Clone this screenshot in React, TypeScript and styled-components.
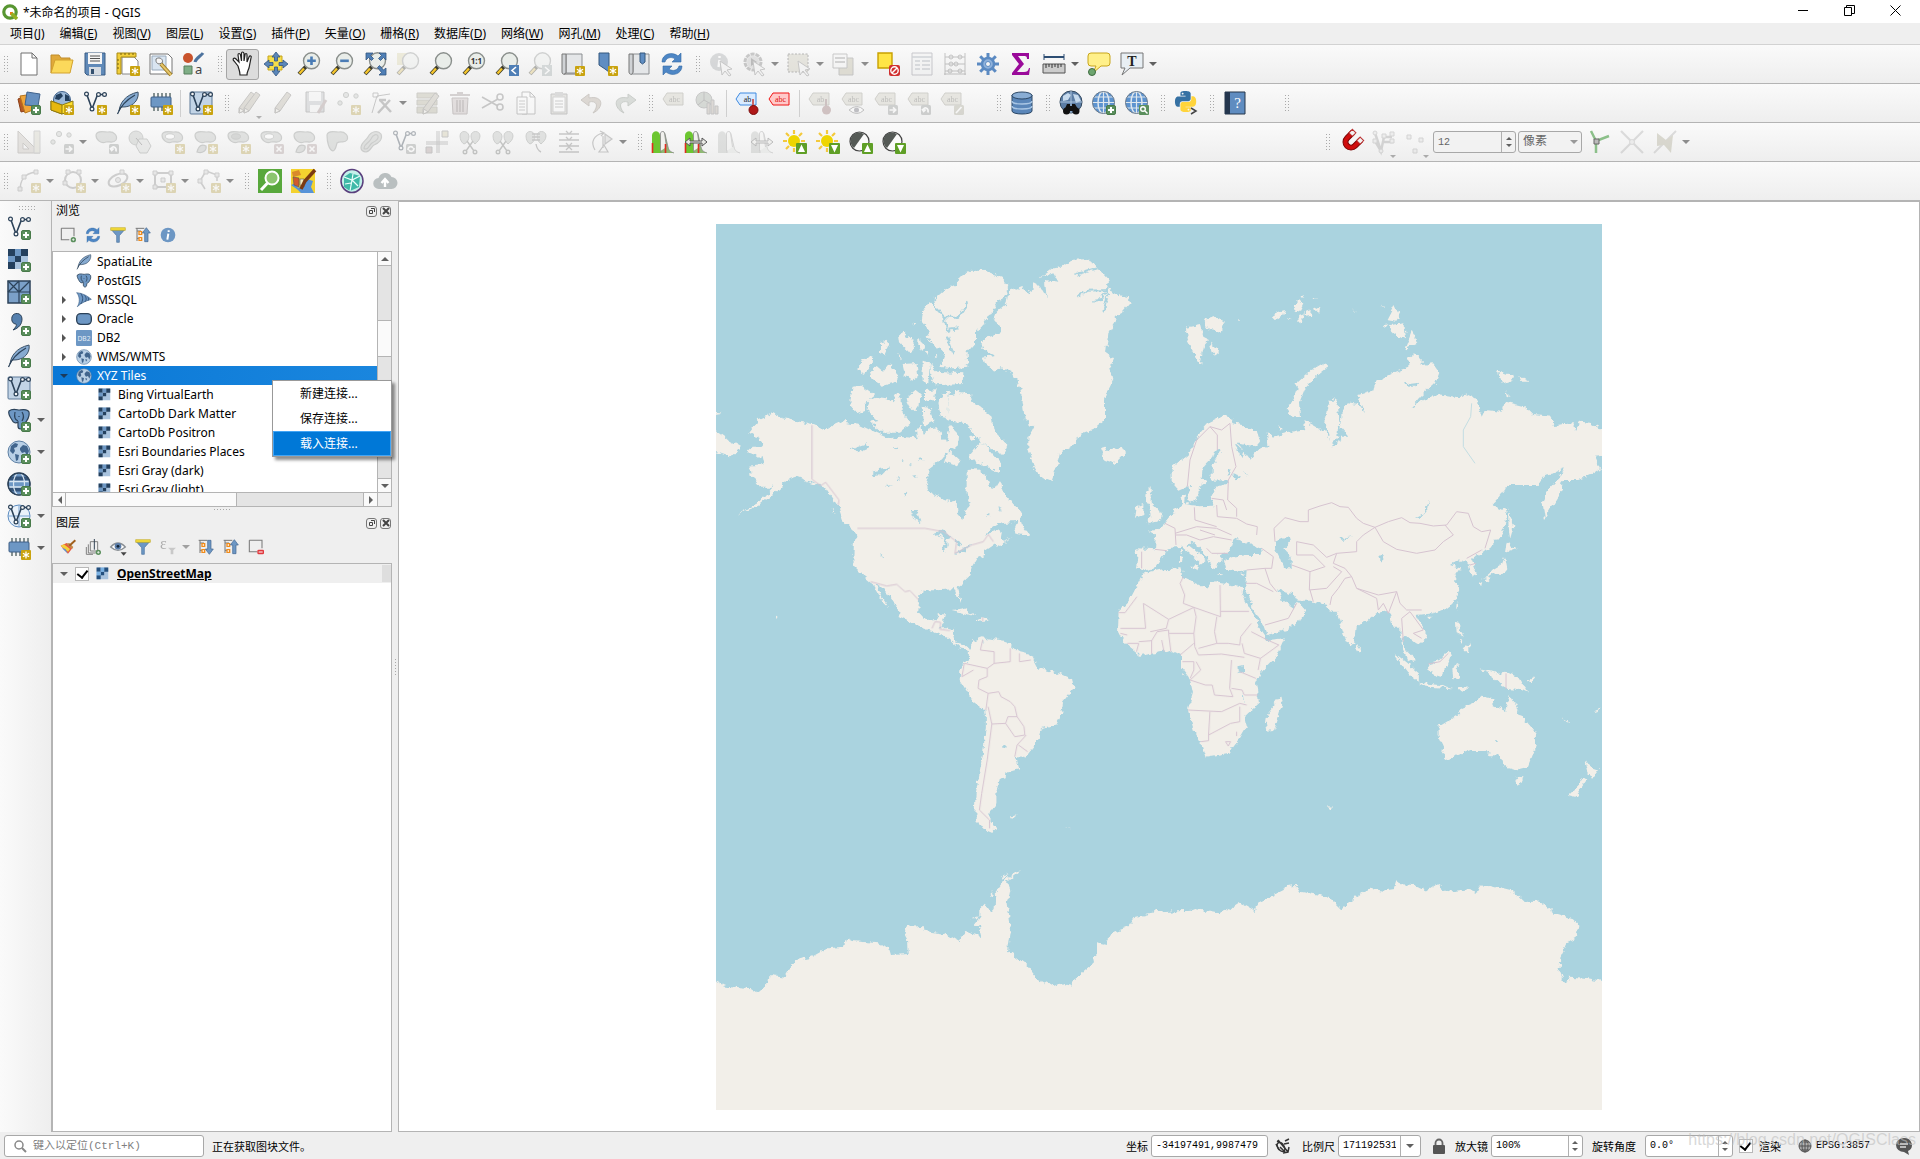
import React from "react";
import styled, { createGlobalStyle, css } from "styled-components";

/* ------------------------------------------------------------------ */
/* Global                                                              */
/* ------------------------------------------------------------------ */

const uiFont = `"Noto Sans", "Noto Sans CJK SC", sans-serif`;
const monoFont = `"Liberation Mono", "Noto Sans CJK SC", monospace`;
const line = "#b4b4b4";

const GlobalStyle = createGlobalStyle`
  * { box-sizing: border-box; }
  body { margin: 0; background: #efefef; font-family: ${uiFont}; font-size: 12px; color: #000; }
  button, input, select { font: inherit; color: inherit; }
`;

/* ------------------------------------------------------------------ */
/* Icon pieces                                                         */
/* ------------------------------------------------------------------ */

const blue = "#6d97c4";
const navy = "#2c4259";

const Star = () => (
  <g>
    <rect x="14" y="14" width="10" height="10" rx="1" fill="#c9a30f" />
    <path d="M19 15.4v7.2M15.9 17.2l6.2 3.6M22.1 17.2l-6.2 3.6" stroke="#fff" strokeWidth="1.3" />
  </g>
);
const Plus = () => (
  <g>
    <rect x="14.5" y="14.5" width="9" height="9" rx="1.5" fill="#5b8f5d" stroke="#487a4a" />
    <path d="M19 16v6M16 19h6" stroke="#fff" strokeWidth="2" />
  </g>
);
const Badge = ({ fill, d }: { fill: string; d: string }) => (
  <g>
    <rect x="14" y="14" width="10" height="10" rx="1.5" fill={fill} />
    <path d={d} stroke="#fff" strokeWidth="1.7" fill="none" />
  </g>
);
const arrowR = "M15.5 19h6M19 16.3l2.7 2.7l-2.7 2.7";
const turn = "M21 21.5c1-5-4.500-6-4.500-2.500M15 18l1.700 2.500l2-2";
const cross = "M16.500 16.500l5 5M21.500 16.500l-5 5";

const Glass = ({ children }: { children?: React.ReactNode }) => (
  <g>
    <path d="M9 14.500L2 22" stroke="#3b3b2b" strokeWidth="4" />
    <path d="M7 16.500L2.500 21.500" stroke="#f5c52c" strokeWidth="2.400" />
    <circle cx="14.500" cy="8.800" r="8" fill="#e9ede9" stroke="#8a8f8c" strokeWidth="1.400" />
    {children}
  </g>
);
const Feather = () => (
  <g>
    <path d="M3 20C4 12 9 4 22 1c1 5-2 12-9 14c-3 1-5 1-8 1z" fill="#86aad0" stroke="#3c5268" />
    <path d="M1.500 23C5 14 12 8 19 4" stroke="#2c4259" fill="none" strokeWidth="1.200" />
  </g>
);
const VNodes = () => (
  <g fill="#f6f6f6" stroke={navy} strokeWidth="1.200">
    <path d="M4 4l5 14l5-13l3-1.500h4" fill="none" strokeWidth="1.600" />
    <circle cx="3.500" cy="3" r="1.900" />
    <circle cx="9" cy="18" r="1.900" />
    <circle cx="15.500" cy="3.500" r="1.900" />
    <circle cx="21.500" cy="3.500" r="1.900" />
  </g>
);
const Globe = () => (
  <g>
    <circle cx="12" cy="12" r="11" fill="#b9d0e6" stroke="#5d7fa3" />
    <path d="M4 6l4-3l3 1l-1 3l-3 1l1 3l-2 3l-3-3zM13 8l3-3l4 1l2 5l-2 5l-2-4l-3 1l-2-3zM8 14l4 1l-1 5l-2 1zM14 15l3 1l-2 3z" fill="#41658d" />
  </g>
);
const GridGlobe = () => (
  <g fill="none" stroke={navy}>
    <circle cx="12" cy="12" r="11" fill={blue} />
    <path d="M3 4.500h18v4H3zM3 15.500h18v4H3z" fill="#35557b" stroke="none" />
    <path d="M1 9.500h22M1 15h22" stroke="#d8e6f2" strokeWidth="1.400" />
    <ellipse cx="12" cy="12" rx="5.500" ry="11" stroke="#d8e6f2" strokeWidth="1.200" />
    <circle cx="12" cy="12" r="11" strokeWidth="1.400" />
  </g>
);
const Chip = () => (
  <g>
    <path d="M5 2v18M9 2v18M13 2v18M17 2v18M21 2v12" stroke="#566" strokeWidth="1.400" />
    <rect x="2" y="6" width="20" height="10" rx="1" fill={blue} stroke="#3f5f86" />
  </g>
);
const Mesh = () => (
  <g>
    <rect x="1" y="1" width="22" height="22" rx="1" fill="#c2d4e6" stroke="#5c7997" />
    <VNodes />
  </g>
);
const Elephant = () => (
  <g>
    <path d="M2 3c4-3 8-1 10-1s8-2 10 2c1 5-2 8-3 10c-2 1-3 1-3 4c0 4-5 4-5 0v-4c-3 2-5 0-6-2c-2-3-4-7-3-9z" fill={blue} stroke={navy} strokeWidth="1.200" />
    <path d="M8 4c-1 5 0 8 3 9M15 4c2 3 2 6 0 9M12 8v1" stroke={navy} fill="none" strokeWidth="1.200" />
  </g>
);
const Checker = ({ dark = "#24405e", mid = "#6d97c4" }: { dark?: string; mid?: string }) => (
  <g>
    <rect x="1" y="1" width="20" height="20" fill="#a9c3de" />
    <path d="M1 1h7v7h-7zM14 1h7v7h-7zM8 8h6v6h-6zM1 14h7v7h-7z" fill={dark} />
    <path d="M8 1h6v7h-6zM1 8h7v6h-7z" fill={mid} />
  </g>
);
const Poly = ({ d = "M1 5C2 0 9 2 13 2c6-1 10 4 8 8c-3 4-7 1-10 2C6 14 1 10 1 5z" }: { d?: string }) => (
  <path d={d} fill="#b9beb9" stroke="#858b86" strokeWidth="1.200" />
);
const Tag = ({ fill = "#cdc9b4", stroke = "#8e8b78", ink = "#5c5a50", label = "abc" }) => (
  <g>
    <path d="M1 8l4-6h16v12h-16z" fill={fill} stroke={stroke} />
    <text x="12.500" y="11" fontSize="8" textAnchor="middle" fontFamily="Liberation Serif, serif" fill={ink}>{label}</text>
  </g>
);
const Dots = () => (
  <g fill="#c5cac5" stroke="#868c87">
    <circle cx="3" cy="12" r="2.200" /><circle cx="9" cy="4" r="2.600" /><circle cx="19" cy="5" r="2.200" />
  </g>
);
const Pencil = () => (
  <g>
    <path d="M4 17L16 1l4 3L9 20l-5 2z" fill="#bdb39c" stroke="#77736a" />
    <path d="M4 22l1-5l4 3z" fill="#f2ede0" stroke="#77736a" />
  </g>
);
const Scissors = () => (
  <g fill="none" stroke="#6f746f" strokeWidth="1.400">
    <path d="M9 11l7 10M15 11l-7 10" /><circle cx="7" cy="22" r="1.800" /><circle cx="17" cy="22" r="1.800" />
  </g>
);
const Leaves = () => (
  <g fill="#b9beb9" stroke="#858b86">
    <path d="M2 6c0-6 8-6 9 0c0 4-2 7-5 8c-2-1-4-4-4-8zM13 6c0-6 9-6 9 0c0 4-3 6-5 8c-2-2-4-4-4-8z" />
  </g>
);
const Hist = ({ on }: { on?: boolean }) => (
  <g>
    <path d="M1 23V5c1-5 7-5 8 0l5 12c2 3 4 5 9 6z" fill={on ? "#6cc630" : "#b4bab4"} />
    <path d="M10 23V4c1-3 3-3 4 0l3 13c1 4 3 5 6 6" fill={on ? "#8fb873" : "#dadeda"} stroke="#888" strokeWidth=".8" />
    <path d="M9.500 21V3c1-2 3-2 4 0l2 14" fill="#f1f1ee" stroke="#888" strokeWidth=".8" />
    {on && <path d="M1.500 13v10M14.500 14v9" stroke="#e02b20" strokeWidth="1.600" />}
  </g>
);
const Sun = ({ d }: { d: string }) => (
  <g>
    <path d="M11 0v4M11 18v4M0 11h4M18 11h4M3 3l3 3M19 3l-3 3M3 19l3-3" stroke="#f3c93c" strokeWidth="2.200" />
    <circle cx="11" cy="11" r="6" fill="#eed500" />
    <rect x="13" y="13" width="11" height="11" rx="1" fill="#5f9f26" />
    <path d={d} fill="#fff" />
  </g>
);
const Contrast = ({ d }: { d: string }) => (
  <g>
    <circle cx="10.500" cy="11.500" r="9.500" fill="#fafafa" stroke="#444" strokeWidth="1.200" />
    <path d="M15 4A8.500 8.500 0 0 0 5 18z" fill="#555a56" />
    <rect x="13" y="13" width="11" height="11" rx="1" fill="#5f9f26" />
    <path d={d} fill="#fff" />
  </g>
);
const up = "M18.500 14.500l3.500 7.500h-7z";
const down = "M18.500 22.500l3.500-7.500h-7z";
const Tree = ({ d }: { d: string }) => (
  <g>
    <path d="M3 2v19M3 6h6M3 17h6M1 2h13" stroke="#777" fill="none" strokeWidth="1.500" />
    <path d="M6 7h4v4h-4zM6 16h4v4h-4z" fill="#fff" stroke="#f08c1c" strokeWidth="2" />
    <path d={d} fill={blue} stroke="#3f648f" />
  </g>
);
const Refresh = () => (
  <g fill="#4d86c5" stroke="#3269a5" strokeWidth=".6">
    <path d="M2 10C2 2 12-1 18 4l3-3v9h-9l3-3c-4-3-9-1-10 3z" />
    <path d="M22 14c0 8-10 11-16 6l-3 3v-9h9l-3 3c4 3 9 1 10-3z" />
  </g>
);
const Funnel = () => (
  <g>
    <path d="M2 4h20l-8 9v10h-4v-10z" fill={blue} stroke="#4a73a0" />
    <path d="M1 1h22v4H1z" fill="#f4dc3a" stroke="#b9a018" strokeWidth=".8" />
  </g>
);
const Box = ({ children }: { children?: React.ReactNode }) => (
  <g><path d="M2 2h19v12M14 19H2V2" fill="none" stroke="#7c7c7c" strokeWidth="1.600" />{children}</g>
);
const Cursor = () => <path d="M11 9l12 8l-5 1l4 5l-2 1l-4-5l-3 4z" fill="#f2f2f2" stroke="#777" />;
const Doc = ({ x = 4, w = 16 }) => <path d={`M${x} 1h${w - 5}l5 5v17h-${w}zM${x + w - 5} 1v5h5`} fill="#fff" stroke="#707070" />;
const World = ({ children }: { children?: React.ReactNode }) => (
  <g>
    <circle cx="11.500" cy="11.500" r="11" fill="#5d93cf" />
    <path d="M.500 11.500h22M2 6h19M2 17h19M11.500 1v21" stroke="#dfe7ee" strokeWidth="1.200" />
    <ellipse cx="11.500" cy="11.500" rx="5.500" ry="11" fill="none" stroke="#dfe7ee" strokeWidth="1.500" />
    <circle cx="11.500" cy="11.500" r="11" fill="none" stroke="#6b7a8a" />
    {children}
  </g>
);
const pyHalf =
  "M14.25.18l.9.2.73.26.59.3.45.32.34.34.25.34.16.33.1.3.04.26.02.2-.01.13V8.5l-.05.63-.13.55-.21.46-.26.38-.3.31-.33.25-.35.19-.35.14-.33.1-.3.07-.26.04-.21.02H8.77l-.69.05-.59.14-.5.22-.41.27-.33.32-.27.35-.2.36-.15.37-.1.35-.07.32-.04.27-.02.21v3.06H3.17l-.21-.03-.28-.07-.32-.12-.35-.18-.36-.26-.36-.36-.35-.46-.32-.59-.28-.73-.21-.88-.14-1.05-.05-1.23.06-1.22.16-1.04.24-.87.32-.71.36-.57.4-.44.42-.33.42-.24.4-.16.36-.1.32-.05.24-.01h.16l.06.01h8.16v-.83H6.18l-.01-2.75-.02-.37.05-.34.11-.31.17-.28.25-.26.31-.23.38-.2.44-.18.51-.15.58-.12.64-.1.71-.06.77-.04.84-.02 1.27.05zm-6.3 1.98l-.23.33-.08.41.08.41.23.34.33.22.41.09.41-.09.33-.22.23-.34.08-.41-.08-.41-.23-.33-.33-.22-.41-.09-.41.09z";

const icons: Record<string, React.ReactNode> = {
  new: <Doc />,
  open: <g><path d="M1 21V3h8l2 3h9v4" fill="#e0a93b" stroke="#bf8c2a" /><path d="M1 21l4-13h18l-3 13z" fill="#fbd95b" stroke="#d3a22e" /></g>,
  save: <g><path d="M2 1h20v22H4l-2-2z" fill="#5f89b8" stroke="#3b5d84" /><path d="M5 1h14v11H5z" fill="#f5f5f5" /><path d="M7 4h10M7 6.500h10M7 9h10" stroke="#555" /><path d="M6 15h12v8H6z" fill="#d5dbe2" /><path d="M8 17h3v5H8z" fill="#33506f" /></g>,
  layout: <g><path d="M6 5h12l4 4v13H6z" fill="#fff" stroke="#888" /><path d="M1 1h19v4H5v17H1z" fill="#f2cf3b" stroke="#a88a14" /><path d="M5 1v2M9 1v2M13 1v2M17 1v2M1 8h2M1 12h2M1 16h2" stroke="#75610f" /><Star /></g>,
  manager: <g><path d="M1 2h18l4 4v16H1z" fill="#fff" stroke="#777" /><path d="M3 4h14v14H3z" fill="#d9e5f1" stroke="#9ab" /><path d="M7 7c4-3 8 1 6 4l-3 1c-3-1-3-2-3-5z" fill="#f6f6f6" stroke="#777" /><path d="M12 12l10 11" stroke="#9a7a22" strokeWidth="4" /><path d="M12 12l10 11" stroke="#e5c56a" strokeWidth="2" /></g>,
  style: <g><circle cx="6" cy="6" r="5" fill="#c9532c" /><path d="M13 10C14 6 19 4 21 1" stroke="#4d739e" strokeWidth="3" fill="none" /><path d="M2 14h8v8H2z" fill="#7fae86" stroke="#577e5d" /><text x="13" y="22" fontSize="13" fontFamily="Noto Sans, sans-serif" fill="#444">a</text></g>,
  hand: <path d="M7 14L3 9c-2-2 0-4 2-2l3 3L7 3c0-2 2-2 2.500 0l1 6V1.500c0-2 2-2 2.500 0V9l1-6c0-2 2-2 2 0v7l2-5c1-2 3-1 2 1l-2 10c-1 3-2 4-2 7H9c0-4-1-5-2-9z" fill="#fff" stroke="#222" strokeWidth="1.200" />,
  pan: <g><path d="M4 4h14v14H4z" fill="#f5de4a" stroke="#c8a51b" /><path d="M12 0l4 5h-2.500v4h-3V5H8zM12 24l4-5h-2.500v-4h-3v4H8zM0 12l5-4v2.500h4v3H5V16zM24 12l-5-4v2.500h-4v3h4V16z" fill="#5a86b9" stroke="#33567f" strokeWidth=".8" /></g>,
  zoomin: <Glass><path d="M14.500 4.500v8.600M10.200 8.800h8.600" stroke="#4a7cb5" strokeWidth="2.600" /></Glass>,
  zoomout: <Glass><path d="M10.200 8.800h8.600" stroke="#4a7cb5" strokeWidth="2.600" /></Glass>,
  zoomfull: <g><Glass /><path d="M3 1h7l-2.500 2.500l3 3l-2 2l-3-3L3 8zM23 1h-7l2.500 2.500l-3 3l2 2l3-3L23 8zM23 23h-7l2.500-2.500l-4-5l2-2l4 4.500L23 16z" fill="#4f7fb6" stroke="#33567f" strokeWidth=".8" /></g>,
  glass: <Glass />,
  zoomsel: <g><path d="M1 1h15v12H1z" fill="#e0d58c" /><Glass /></g>,
  native: <Glass><text x="14.500" y="12" fontSize="8" fontWeight="700" textAnchor="middle" fontFamily="Noto Sans, sans-serif" fill="#333">1:1</text></Glass>,
  zoomlast: <Glass><path d="M14 13h10v11H14z" fill="#4f7fb6" /><path d="M21 15l-4 3.500l4 3.500" stroke="#fff" strokeWidth="1.600" fill="none" /></Glass>,
  zoomnext: <Glass><path d="M14 13h10v11H14z" fill="#9aa" /><path d="M17 15l4 3.500l-4 3.500" stroke="#fff" strokeWidth="1.600" fill="none" /></Glass>,
  view: <g><path d="M5 2h16v19H5z" fill="#e4e6e8" stroke="#8c8f92" /><path d="M1 2h4v18c0 3-4 3-4 0z" fill="#cfd2d5" stroke="#777" /><path d="M3 22h12" stroke="#777" /><Star /></g>,
  bookmark: <g><path d="M5 1h10v19l-4-3l-6-4z" fill="#5f8dc2" stroke="#35587f" /><Star /></g>,
  bookmarks: <g><path d="M6 2h16v20H4c2 0 2-3 2-5z" fill="#e4e6e8" stroke="#8c8f92" /><path d="M2 2h4v18c0 3-4 3-4 0z" fill="#cfd2d5" stroke="#777" /><path d="M13 1h5v9l-2.500 2l-2.500-2z" fill="#5f8dc2" stroke="#35587f" /></g>,
  refresh: <Refresh />,
  identify: <g><circle cx="10" cy="10" r="9" fill="#9ea4a9" /><path d="M10.500 4v2M10.500 8l-1 7" stroke="#fff" strokeWidth="2.400" /><Cursor /></g>,
  action: <g><circle cx="11" cy="10" r="8" fill="#ddd" stroke="#777" strokeWidth="3" strokeDasharray="4 1" /><circle cx="11" cy="10" r="6" fill="#bbb" /><path d="M9 6l6 4l-6 4z" fill="#555" /><Cursor /></g>,
  select: <g><path d="M1 2h20v18H1z" fill="#cbc5a8" stroke="#444" strokeDasharray="2 1.500" /><Cursor /></g>,
  form: <g><path d="M7 6h14v17H7z" fill="#bdb68c" stroke="#777" /><path d="M1 2h14v14H1z" fill="#f4f4f4" stroke="#777" /><path d="M3 6h10M3 10h10" stroke="#777" strokeWidth="1.500" /></g>,
  deselect: <g><path d="M1 1h14v15H1z" fill="#ffe545" stroke="#c8a000" strokeWidth="1.400" /><rect x="12" y="13" width="11" height="11" rx="2" fill="#d03030" /><circle cx="17.500" cy="18.500" r="3.700" fill="none" stroke="#fff" strokeWidth="1.400" /><path d="M15 21l5-5" stroke="#fff" strokeWidth="1.400" /></g>,
  table: <g><path d="M2 1h20v22H2z" fill="#eef0f2" stroke="#778" /><path d="M2 5h20M5 9h5M12 9h8M5 13h5M12 13h8M5 17h5M12 17h8" stroke="#8a97a6" strokeWidth="1.500" /></g>,
  abacus: <g fill="none" stroke="#666"><path d="M2 1v22M22 1v22M2 5h20M2 12h20M2 19h20M1 22h22" /><circle cx="8" cy="5" r="2" /><circle cx="17" cy="5" r="2" /><circle cx="8" cy="12" r="2" /><circle cx="13" cy="12" r="2" /><circle cx="7" cy="19" r="2" /><circle cx="17" cy="19" r="2" /></g>,
  gear: <g fill="none" stroke="#5b8ac2"><path d="M12 1v22M1 12h22M4.200 4.200l15.600 15.600M19.800 4.200L4.200 19.800" strokeWidth="3" /><circle cx="12" cy="12" r="6" fill="#8fb2dc" strokeWidth="2.500" /><circle cx="12" cy="12" r="2.500" fill="#f5f5f5" /></g>,
  sigma: <path d="M3 1h17v6h-2c0-3-1-3-4-3H9l6 8l-7 8h7c3 0 4-1 5-4h1l-1 7H3v-2l7-9L3 3z" fill="#9a0a9a" />,
  measure: <g><path d="M2 5h20" stroke="#2d4d73" strokeWidth="2" /><path d="M2 2v6M22 2v6" stroke="#2d4d73" /><path d="M1 12h22v9H1z" fill="#ccc" stroke="#555" /><path d="M4 12v4M7 12v3M10 12v4M13 12v3M16 12v4M19 12v3" stroke="#333" /></g>,
  tip: <g><path d="M4 1h16q3 0 3 3v7q0 3-3 3h-6l-8 7l3-7H4q-3 0-3-3V4q0-3 3-3z" fill="#fff08a" stroke="#c8a51b" /><circle cx="5" cy="20" r="3.500" fill="#6da56f" stroke="#3e6b40" /></g>,
  note: <g><path d="M1 1h22v15H10l-8 7l3-7H1z" fill="#e8eff4" stroke="#777" /><text x="12" y="13.500" fontSize="14" fontWeight="700" textAnchor="middle" fontFamily="Liberation Serif, serif" fill="#222">T</text></g>,

  dsm: <g><path d="M1 8l7-3v15l-4 1z" fill="#b85a26" stroke="#8a3f16" /><path d="M3 5l13-2v16l-8 3z" fill="#f0a53a" stroke="#b5741c" /><path d="M10 1l13 2l-2 12l-13-1z" fill="#6790c0" stroke="#40628c" /><Plus /></g>,
  geopkg: <g><circle cx="12" cy="9" r="8.500" fill="#9cb9d8" stroke="#40628c" /><path d="M6 4l5-2l2 3l-4 4l-4-1zM15 3l4 2l1 5h-5z" fill="#24405e" /><path d="M1 10l11 4l11-4v9l-11 4l-11-4z" fill="#ffdf2e" stroke="#8e7a12" /><path d="M12 14v9l-11-4v-9z" fill="#e6b80f" stroke="#8e7a12" /><Star /></g>,
  vnew: <g><VNodes /><Star /></g>,
  feathernew: <g><Feather /><Star /></g>,
  chipnew: <g><Chip /><Star /></g>,
  meshnew: <g><Mesh /><Star /></g>,
  pencils: <g><g transform="translate(-3 0)"><Pencil /></g><g transform="translate(2 0)"><Pencil /></g><path d="M18 25h6l-3 3z" fill="#444" /></g>,
  pencil: <Pencil />,
  saveedit: <g><path d="M2 1h18v20H2z" fill="#b5babf" stroke="#777" /><path d="M5 1h12v9H5zM6 14h10v7H6z" fill="#f5f5f5" /><path d="M14 22l8-13" stroke="#a88" strokeWidth="3" /></g>,
  points: <g><Dots /><Star /></g>,
  vertex: <g fill="none" stroke="#777"><path d="M2 22L7 5L20 3" /><path d="M3 2h5v4H3z" /><path d="M10 9l11 12M20 9L8 22" strokeWidth="2.500" /><path d="M9 9h7" strokeWidth="2.500" /></g>,
  multi: <g><path d="M2 2h20v5H2zM2 9h20v5H2zM2 16h20v6H2z" fill="#b5b08a" stroke="#8a8773" /><g transform="translate(4 1)"><Pencil /></g></g>,
  trash: <g><path d="M4 7h16l-1 16H5z" fill="#c7b6b6" stroke="#826f6f" /><path d="M2 4h20M9 2h6M9 9v12M12 9v12M15 9v12" stroke="#826f6f" strokeWidth="1.500" /></g>,
  cut: <g fill="none" stroke="#777" strokeWidth="1.600"><path d="M1 6l16 9M1 17l16-9" /><circle cx="19" cy="6" r="3" /><circle cx="19" cy="16" r="3" /></g>,
  copy: <g><Doc x={8} w={13} /><path d="M3 6h10v17H3z" fill="#fff" stroke="#707070" /><path d="M5 10h6M5 13h6M5 16h6M5 19h6" stroke="#888" /></g>,
  paste: <g><path d="M4 3h16v20H4z" fill="#c9c6ba" stroke="#777" /><path d="M6 6h12v15H6z" fill="#fff" stroke="#999" /><path d="M8 1h8v4H8z" fill="#aaa" /><path d="M8 10h8M8 13h8M8 16h8" stroke="#888" /></g>,
  undo: <path d="M9 3L1 9l8 6v-4c8-2 10 4 4 11c11-5 11-18-4-15z" fill="#b9a590" stroke="#8a7a68" />,
  redo: <path d="M15 3l8 6l-8 6v-4c-8-2-10 4-4 11c-11-5-11-18 4-15z" fill="#a3b3a3" stroke="#788878" />,
  tag: <Tag />,
  diagram: <g><circle cx="9" cy="9" r="8" fill="#9cab98" stroke="#777" /><path d="M9 9V1M9 9l-6 5M9 9l7 4" stroke="#666" /><path d="M12 12h3v11h-3zM16 9h3v14h-3zM20 15h3v8h-3z" fill="#b9aa9a" stroke="#777" /></g>,
  tagpin: <g><Tag fill="#d9ebff" stroke="#3f8ae0" ink="#222" label="ab" /><path d="M18 8v8" stroke="#c66" strokeWidth="2" /><circle cx="18.500" cy="19" r="4.500" fill="#b01818" stroke="#7a0d0d" /></g>,
  tagred: <Tag fill="#ffc9c9" stroke="#f01515" ink="#e01010" />,
  tagpin2: <g><Tag label="ab" /><path d="M18 8v8" stroke="#966" strokeWidth="2" /><circle cx="18.500" cy="19" r="4.500" fill="#a86868" /></g>,
  tageye: <g><Tag /><path d="M8 19q8-7 15 0q-7 7-15 0z" fill="#fff" stroke="#666" /><circle cx="15.500" cy="19" r="2.500" fill="#667" /></g>,
  tagmove: <g><Tag /><Badge fill="#8b918d" d={arrowR} /></g>,
  tagrot: <g><Tag /><Badge fill="#8b918d" d={turn} /></g>,
  tagedit: <g><Tag /><Badge fill="#aaa788" d="M16 22l5.500-6" /></g>,
  db: <g fill="#5a86b9" stroke="#2c4866"><path d="M2 4v16c0 4 20 4 20 0V4z" /><ellipse cx="12" cy="4.500" rx="10" ry="3.500" fill="#89add4" /><path d="M2 10c0 4 20 4 20 0M2 15c0 4 20 4 20 0" fill="none" stroke="#a9c6e4" strokeWidth="1.500" /></g>,
  metasearch: <g><circle cx="12" cy="11" r="11" fill="#5c7ea6" stroke="#33495f" /><path d="M4 5l5-3l3 2l-3 5l-5 1zM14 3l5 1l3 6l-5 2z" fill="#c7dbee" /><path d="M1 11h22M12 0v22" stroke="#a9c2dc" /><path d="M5 20l3-7h3v2h2v-2h3l4 7z" fill="#111" /><circle cx="7.500" cy="20" r="3.500" fill="#111" /><circle cx="17" cy="20" r="3.500" fill="#111" /></g>,
  webadd: <World><Plus /></World>,
  websearch: <World><rect x="14" y="14" width="10" height="10" rx="1" fill="#5b8f5d" /><circle cx="18" cy="18" r="2.300" fill="none" stroke="#fff" strokeWidth="1.400" /><path d="M20 20l2.500 2.500" stroke="#fff" strokeWidth="1.400" /></World>,
  python: <g><g transform="translate(1 0) scale(.88)"><path d={pyHalf} fill="#3671a3" /><path d={pyHalf} fill="#ffd43b" transform="rotate(180 12 12)" /></g><path d="M17 17l5 3l-5 3" stroke="#444" fill="none" strokeWidth="1.500" /></g>,
  help: <g><path d="M2 1h20v22H2z" fill="#5f8cc0" stroke="#27364a" /><path d="M2 1h5v22H2z" fill="#24364e" /><text x="14.500" y="17" fontSize="15" textAnchor="middle" fontFamily="Liberation Serif, serif" fill="#fff">?</text></g>,

  advdig: <g><path d="M1 1v22h22z" fill="#c9c0b4" stroke="#8d857b" /><path d="M6 13v6h6z" fill="#f4f4f4" stroke="#8d857b" /><path d="M17 1h6v22h-6z" fill="#d4d0b8" stroke="#999" /></g>,
  movefeat: <g><Dots /><Badge fill="#8b918d" d={arrowR} /></g>,
  rotate: <g><Poly /><Badge fill="#8b918d" d={turn} /></g>,
  simplify: <g><circle cx="8" cy="8" r="7" fill="#b9beb9" stroke="#858b86" /><path d="M11 9h8l4 7l-4 7h-7l-4-7z" fill="#d4d7d4" stroke="#858b86" /><path d="M8 8l6 7" stroke="#555" /></g>,
  addring: <g><Poly /><ellipse cx="9" cy="6.500" rx="4.500" ry="2.700" fill="#fff" stroke="#858b86" /><Star /></g>,
  addpart: <g><Poly /><Poly d="M3 22c2-7 5-8 9-6c1 4-3 8-9 6z" /><Star /></g>,
  fillring: <g><Poly /><ellipse cx="9" cy="6.500" rx="4.500" ry="2.700" fill="#9ca29d" stroke="#858b86" /><Star /></g>,
  delring: <g><Poly /><ellipse cx="9" cy="6.500" rx="4.500" ry="2.700" fill="#fff" stroke="#858b86" /><Badge fill="#b59696" d={cross} /></g>,
  delpart: <g><Poly /><Poly d="M3 22c2-7 5-8 9-6c1 4-3 8-9 6z" /><Badge fill="#b59696" d={cross} /></g>,
  reshape: <Poly d="M1 5C2 0 9 2 13 2c6-1 10 4 8 8c-3 4-6 0-10 3c-1 3-1 7-4 8C3 20 1 12 1 5z" />,
  offset: <Poly d="M2 18C2 12 7 11 9 7C12 1 19 0 22 4c2 5-2 9-7 11c-3 2-4 7-8 7c-3 0-5-2-5-4zM5 18c0-4 4-4 7-9c2-5 6-5 7-3c1 3-2 5-6 7c-3 2-3 6-6 6c-1 0-2 0-2-1z" />,
  reverse: <g><VNodes /><Badge fill="#8b918d" d="M16 20c0-4 4-4 5-2M22 18c0 4-4 4-5 2" /></g>,
  trim: <g stroke="#777" fill="none"><path d="M12 1v22M1 12h22M14 1v22M1 14h22" /><path d="M1 17h6v6H1z" fill="#b59696" /><path d="M17 1h6v6h-6z" fill="#cfc48d" /></g>,
  splitf: <g><Leaves /><Scissors /></g>,
  merge: <g><Leaves /><path d="M12 14q1 6 5 8M8 4h8M8 7h8M8 10h8" fill="none" stroke="#777" strokeWidth="1.400" /></g>,
  attrs: <path d="M2 4h20M2 10h20M2 16h20M2 22h20M9 1l3 3l3-3M9 7l3 3l3-3M9 13l3 3l3-3M9 20l3-3l3 3" stroke="#777" fill="none" strokeWidth="1.300" />,
  symrot: <g fill="none" stroke="#777" strokeWidth="1.200"><path d="M5 20C0 12 4 5 13 3M10 1l4 2l-3 3M13 6v12M9 22h9l-4-7z" /><path d="M15 4l7 5l-7 5z" fill="#ccc" /></g>,
  hist: <Hist on />,
  histarrow: <g><Hist on /><path d="M1 12l5-4v3h12V8l5 4l-5 4v-3H6v3z" fill="#e9e9e5" stroke="#555" /></g>,
  histoff: <Hist />,
  histarrowoff: <g><Hist /><path d="M1 12l5-4v3h12V8l5 4l-5 4v-3H6v3z" fill="#e9e9e5" stroke="#555" /></g>,
  sunup: <Sun d={up} />, sundown: <Sun d={down} />,
  conup: <Contrast d={up} />, condown: <Contrast d={down} />,
  magnet: <g transform="rotate(45 12 12)"><path d="M4 4v8a8 8 0 0 0 16 0V4h-5v8a3 3 0 0 1-6 0V4z" fill="#d00c0c" stroke="#7c0606" /><path d="M4 2h5v5H4zM15 2h5v5h-5z" fill="#f2f2f2" stroke="#b33" /></g>,
  snapall: <g stroke="#999" fill="#ddd"><path d="M3 3l6 18l3-14h8M3 11l6 10M12 12h9" fill="none" strokeWidth="2.500" /><circle cx="3" cy="3" r="2" /><circle cx="9" cy="21" r="2" /><path d="M10 4h4v4h-4zM18 2h4v4h-4zM18 9h4v4h-4zM1 9h4v4H1z" /><path d="M18 25h6l-3 3z" fill="#333" stroke="none" /></g>,
  snappts: <g><path d="M2 5h4v4H2zM14 8h4v4h-4zM8 19h4v4H8z" fill="#ddd" stroke="#999" /><path d="M18 25h6l-3 3z" fill="#333" /></g>,
  topo: <g><path d="M9 23V11L4 1M9 11l13-5" stroke="#8cc08a" strokeWidth="2.500" fill="none" /><path d="M7 9h5v5H7z" fill="#bbb" stroke="#666" /></g>,
  inter: <g stroke="#aaa"><path d="M1 1l22 22M23 1L1 23" strokeWidth="2.200" /><circle cx="12" cy="12" r="2.500" fill="#ddd" /></g>,
  trace: <g><path d="M23 1L1 23" stroke="#aaa" strokeWidth="2" /><path d="M4 3l9 7l7-5l-2 18l-7-8l-7 1z" fill="#aaa57c" /></g>,

  curve: <g><path d="M3 22C3 11 7 5 18 3" stroke="#888" strokeWidth="1.500" fill="none" /><path d="M1 18h4v4H1zM5 6h4v4H5zM17 1h4v4h-4z" fill="#ccc" stroke="#888" /><Star /></g>,
  circ: <g><circle cx="11" cy="11" r="8" fill="none" stroke="#888" strokeWidth="2" /><path d="M4 1h4v4H4zM15 1h4v4h-4zM1 12h4v4H1z" fill="#ccc" stroke="#888" /><Star /></g>,
  ell: <g><ellipse cx="11" cy="11" rx="10" ry="5.500" transform="rotate(-25 11 11)" fill="none" stroke="#888" strokeWidth="2" /><circle cx="11" cy="11" r="2.500" fill="#ccc" stroke="#888" /><path d="M13 1h4v4h-4z" fill="#ccc" stroke="#888" /><Star /></g>,
  rect: <g><path d="M3 4h16v14H3z" fill="none" stroke="#888" strokeWidth="2" /><path d="M1 2h4v4H1zM17 2h4v4h-4zM9 9h4v4H9zM1 16h4v4H1z" fill="#ccc" stroke="#888" /><Star /></g>,
  polygon: <g><path d="M9 2L3 12l5 8M9 2l11 4v6" fill="none" stroke="#888" strokeWidth="1.600" /><path d="M7 1h4v4H7zM1 10h4v4H1zM18 4h4v4h-4z" fill="#ccc" stroke="#888" /><Star /></g>,
  qsearch: <g><rect width="24" height="24" fill="#58a83c" /><circle cx="14" cy="9" r="6.500" fill="#8cc56f" stroke="#fff" strokeWidth="2" /><path d="M9.500 14L3 21" stroke="#fff" strokeWidth="3" /></g>,
  qmap: <g><rect width="24" height="24" fill="#f4d22f" /><path d="M0 16l5-2l2 5l6-3l3-6l6 2l-2 6l3 6H10l-3-3z" fill="#5793d8" /><path d="M1 3l7-2l2 5l-8 2z" fill="#d98a2b" /><path d="M9 10h4v8l-4-2z" fill="#f6edc0" stroke="#555" strokeWidth=".6" /><path d="M2 8l6 1v9l-5-2z" fill="#d25a2b" stroke="#555" strokeWidth=".6" /><path d="M24 1l-10 11l-4 8" stroke="#7b3a12" strokeWidth="3.500" fill="none" /></g>,
  crystal: <g><ellipse cx="12" cy="12" rx="11" ry="11.500" fill="#c4f1ea" stroke="#5a3f7d" strokeWidth="1.500" /><path d="M4 8l6-4l10 3l-1 11l-9 4l-6-4z" fill="#3fb9a8" /><path d="M4 8l8 3l8-4M12 11l-2 11M5 15l6-1M13 5l-1 6l6 6" stroke="#eafffb" fill="none" strokeWidth="1.200" /></g>,
  cloud: <g><path d="M6 20a5.500 5.500 0 0 1-.500-11a7 7 0 0 1 13-1a6 6 0 0 1 0 12z" fill="#b9bfc0" /><path d="M12 18v-6M8.500 14L12 10l3.500 4" stroke="#fff" strokeWidth="2.400" fill="none" /></g>,

  addvector: <g><VNodes /><Plus /></g>,
  addraster: <g><Checker /><Plus /></g>,
  addmesh: <g><path d="M1 1h22v22H1z" fill="#7ba0c8" stroke={navy} strokeWidth="1.500" /><path d="M1 12h22M12 1v22M1 1l11 11M12 1L1 12M23 1L12 12" stroke={navy} strokeWidth="1.200" /><Plus /></g>,
  addcsv: <g><path d="M5 5c1-5 10-5 10 2c0 5-3 9-9 11c3-3 4-5 3-6c-3 0-5-3-4-7z" fill="#5580ae" stroke={navy} /><Plus /></g>,
  addspatialite: <g><Feather /><Plus /></g>,
  addvirtual: <g><Mesh /><Plus /></g>,
  addpg: <g><Elephant /><Plus /></g>,
  addwms: <g><Globe /><Plus /></g>,
  addwcs: <g><GridGlobe /><Plus /></g>,
  addwfs: <g><circle cx="12" cy="12" r="11" fill="#eaf2fa" stroke="#5d8cc0" /><path d="M1 12h22M12 1v22" stroke="#7aa5d3" /><VNodes /><Plus /></g>,

  feather: <Feather />, elephant: <Elephant />,
  mssql: <g><path d="M1 1c9 1 15 4 22 10c-7 2-15 5-21 11c4-6 4-15-1-21z" fill={blue} stroke="#41658d" /><path d="M7 2c4 5 4 11 0 16M13 5c3 4 3 7 0 10M18 8c1 2 1 3 0 5" fill="none" stroke="#2f5075" strokeWidth="1.400" /></g>,
  oracle: <rect x="1" y="4" width="22" height="16" rx="6" fill={blue} stroke={navy} strokeWidth="2" />,
  db2: <g><rect width="24" height="24" rx="2" fill={blue} /><text x="12" y="16" fontSize="10" textAnchor="middle" fontFamily="Noto Sans, sans-serif" fill="#e6eef6">DB2</text></g>,
  globe: <Globe />, tiles: <Checker />, osm: <Checker dark="#24507e" mid="#79b0e2" />,
  boxadd: <Box><circle cx="20" cy="19" r="4" fill="#5b8f5d" /><path d="M20 17v4M18 19h4" stroke="#fff" /></Box>,
  boxdel: <Box><rect x="14" y="16" width="10" height="7" rx="2" fill="#e0393e" /><path d="M16 19.500h6" stroke="#fff" strokeWidth="1.500" /></Box>,
  funnel: <Funnel />,
  collapse: <Tree d="M17 1l6 8h-3.500v13h-5V9H11z" />,
  expand: <Tree d="M17 23l6-8h-3.500V2h-5v13H11z" />,
  info: <g><circle cx="12" cy="12" r="11" fill={blue} /><path d="M13 5v2.500M12.500 10l-1.500 9" stroke="#fff" strokeWidth="3" /></g>,
  brush: <g><path d="M1 10l9-4l9 7l-7 9z" fill="#e9573f" /><path d="M1 10l5-2l9 7l-3 4z" fill="#f2d13c" /><path d="M3 14l5 1l4 7z" fill="#5c8fd0" /><path d="M9 7l5-1l6 6l-2 3z" fill="#c58a4a" /><path d="M14 10l9-8" stroke="#a0601e" strokeWidth="3" /></g>,
  group: <g><path d="M8 4h11v14H8zM5 8v13h11M2 12v11h10" fill="none" stroke="#777" strokeWidth="1.400" /><path d="M14 0v16" stroke="#345" strokeWidth="1.500" /><circle cx="20" cy="20" r="4" fill="#5b8f5d" /><path d="M20 18v4M18 20h4" stroke="#fff" /></g>,
  eye: <g><path d="M1 12q11-12 22 0q-11 10-22 0z" fill="#fff" stroke="#8a8f94" strokeWidth="2" /><circle cx="12" cy="11" r="5" fill="#5a7ca8" /><circle cx="12" cy="11" r="2" fill="#123" /><path d="M16 20h9l-4.500 5z" fill="#444" /></g>,
  eps: <g><text x="0" y="15" fontSize="24" fontFamily="Liberation Serif, serif" fill="#777">ε</text><path d="M12 13h12l-4 4v6h-4v-6z" fill="#aaa" /></g>,
};

const Svg = styled.svg<{ $size: number }>`
  display: block;
  flex: none;
  width: ${(p) => p.$size}px;
  height: ${(p) => p.$size}px;
  fill: none;
  overflow: visible;
`;
const Icon = ({ name, size = 24 }: { name: string; size?: number }) => (
  <Svg viewBox="0 0 24 24" $size={size} aria-hidden="true">{icons[name]}</Svg>
);

const Caret = styled.span<{ $dir?: "up" | "down" | "left" | "right"; $color?: string; $size?: number }>`
  flex: none;
  width: 0;
  height: 0;
  border: ${(p) => p.$size ?? 4}px solid transparent;
  ${(p) => {
    const c = p.$color ?? "#606060";
    switch (p.$dir) {
      case "up": return css`border-bottom-color: ${c}; border-top-width: 0;`;
      case "left": return css`border-right-color: ${c}; border-left-width: 0;`;
      case "right": return css`border-left-color: ${c}; border-right-width: 0;`;
      default: return css`border-top-color: ${c}; border-bottom-width: 0;`;
    }
  }}
`;

/* ------------------------------------------------------------------ */
/* Window frame                                                        */
/* ------------------------------------------------------------------ */

const Window = styled.div`
  display: flex;
  flex-direction: column;
  height: 100vh;
  overflow: hidden;
`;
const TitleBar = styled.header`
  display: flex;
  align-items: center;
  height: 23px;
  flex: none;
  padding: 0 2px;
  background: #fff;
`;
const Title = styled.h1`
  flex: 1;
  margin: 0 0 0 5px;
  font-size: 12px;
  font-weight: 400;
`;
const CaptionButton = styled.button`
  display: grid;
  place-items: center;
  width: 46px;
  height: 20px;
  margin-bottom: 3px;
  padding: 0;
  border: 0;
  background: none;
`;
const MenuBar = styled.nav`
  display: flex;
  flex: none;
  gap: 1px;
  height: 22px;
  padding-left: 3px;
  border-bottom: 1px solid #d2d2d2;
`;
const MenuButton = styled.button`
  padding: 0 7px;
  border: 0;
  background: none;
  font-size: 12px;
  line-height: 20px;
  white-space: nowrap;
`;

/* ------------------------------------------------------------------ */
/* Toolbars                                                            */
/* ------------------------------------------------------------------ */

const ToolRow = styled.div`
  display: flex;
  flex: none;
  height: 39px;
  gap: 4px;
  border-bottom: 1px solid ${line};
  background: linear-gradient(#fafafa, #eeeeee);
`;
const Toolbar = styled.div<{ $before?: string }>`
  display: flex;
  align-items: center;
  margin-left: ${(p) => p.$before ?? "0"};
`;
const dots = css`background: radial-gradient(circle, #a9a9a9 0 1px, transparent 1px) 0 0 / 3px 3px;`;
const Handle = styled.span`
  width: 6px;
  height: 18px;
  margin: 0 3px;
  ${dots}
`;
const Separator = styled.span`
  width: 1px;
  height: 27px;
  margin: 0 3px;
  background: #cfcfcf;
`;
const ToolButton = styled.button<{ $wide?: boolean; $pressed?: boolean }>`
  display: flex;
  align-items: center;
  gap: 5px;
  width: ${(p) => (p.$wide ? 45 : 33)}px;
  height: 31px;
  padding: 0 0 0 4px;
  border: 1px solid ${(p) => (p.$pressed ? "#a5a5a5" : "transparent")};
  border-radius: 3px;
  background: ${(p) => (p.$pressed ? "#dcdcdc" : "none")};
  &:disabled svg { filter: grayscale(0.4); opacity: 0.36; }
  &:disabled span { opacity: 0.7; }
`;

type Tool = [icon: string, label: string, flags?: string];
/* flags: d = disabled, a = has a menu arrow, p = pressed, | = separator before */
const Tools = ({ items, before, children }: { items: Tool[]; before?: string; children?: React.ReactNode }) => (
  <Toolbar role="toolbar" $before={before}>
    <Handle />
    {items.map(([icon, label, f = ""]) => (
      <React.Fragment key={label}>
        {f.includes("|") && <Separator />}
        <ToolButton aria-label={label} disabled={f.includes("d")} $wide={f.includes("a")} $pressed={f.includes("p")}>
          <Icon name={icon} />
          {f.includes("a") && <Caret />}
        </ToolButton>
      </React.Fragment>
    ))}
    {children}
  </Toolbar>
);

const fileTools: Tool[] = [["new", "新建项目"], ["open", "打开项目"], ["save", "保存项目"], ["layout", "新建打印布局"], ["manager", "布局管理器"], ["style", "样式管理器"]];
const navTools: Tool[] = [
  ["hand", "平移地图", "p"], ["pan", "平移到选择部分"], ["zoomin", "放大"], ["zoomout", "缩小"], ["zoomfull", "全图显示"],
  ["zoomsel", "缩放到选择部分", "d"], ["glass", "缩放到图层"], ["native", "缩放到原始分辨率"], ["zoomlast", "上一视图"], ["zoomnext", "下一视图", "d"],
  ["view", "新建地图视图"], ["bookmark", "新建书签"], ["bookmarks", "显示书签"], ["refresh", "刷新"],
];
const attrTools: Tool[] = [
  ["identify", "识别要素", "d"], ["action", "运行要素动作", "da"], ["select", "选择要素", "da"], ["form", "按值选择", "da"], ["deselect", "取消选择"],
  ["table", "打开属性表", "d"], ["abacus", "字段计算器", "d"], ["gear", "工具箱"], ["sigma", "统计汇总"], ["measure", "测量", "a"], ["tip", "地图提示"], ["note", "文本注记", "a"],
];
const sourceTools: Tool[] = [["dsm", "数据源管理器"], ["geopkg", "新建 GeoPackage"], ["vnew", "新建 Shapefile"], ["feathernew", "新建 SpatiaLite"], ["chipnew", "新建临时图层"], ["meshnew", "新建虚拟图层", "|"]];
const editTools: Tool[] = [
  ["pencils", "当前编辑", "d"], ["pencil", "切换编辑", "d"], ["saveedit", "保存编辑", "d"], ["points", "添加要素", "d"], ["vertex", "顶点工具", "da"], ["multi", "修改属性", "d"],
  ["trash", "删除所选", "d"], ["cut", "剪切", "d"], ["copy", "复制", "d"], ["paste", "粘贴", "d"], ["undo", "撤销", "d"], ["redo", "重做", "d"],
];
const labelTools: Tool[] = [
  ["tag", "图层标注", "d"], ["diagram", "图表选项", "d"], ["tagpin", "高亮固定标注", "|"], ["tagred", "未放置标注"], ["tagpin2", "固定标注", "d|"],
  ["tageye", "显示标注", "d"], ["tagmove", "移动标注", "d"], ["tagrot", "旋转标注", "d"], ["tagedit", "更改标注", "d"],
];
const webTools: Tool[] = [["metasearch", "元搜索"], ["webadd", "添加网络服务"], ["websearch", "搜索网络服务"]];
const advTools: Tool[] = [
  ["advdig", "高级数字化", "d"], ["movefeat", "移动要素", "da"], ["rotate", "旋转要素", "d"], ["simplify", "简化要素", "d"], ["addring", "添加环", "d"], ["addpart", "添加部件", "d"],
  ["fillring", "填充环", "d"], ["delring", "删除环", "d"], ["delpart", "删除部件", "d"], ["reshape", "整形要素", "d"], ["offset", "偏移曲线", "d"], ["reverse", "反转线", "d"],
  ["trim", "裁剪延伸", "d"], ["splitf", "分割要素", "d"], ["splitf", "分割部件", "d"], ["merge", "合并要素", "d"], ["attrs", "合并属性", "d"], ["symrot", "旋转点符号", "da"],
];
const rasterTools: Tool[] = [
  ["hist", "局部直方图拉伸"], ["histarrow", "全部直方图拉伸"], ["histoff", "局部累计拉伸", "d"], ["histarrowoff", "全部累计拉伸", "d"],
  ["sunup", "增加亮度"], ["sundown", "降低亮度"], ["conup", "增加对比度"], ["condown", "降低对比度"],
];
const snapTools: Tool[] = [["magnet", "启用捕捉"], ["snapall", "捕捉图层", "d"], ["snappts", "捕捉类型", "d"]];
const shapeTools: Tool[] = [["curve", "圆弧", "da"], ["circ", "圆", "da"], ["ell", "椭圆", "da"], ["rect", "矩形", "da"], ["polygon", "正多边形", "da"]];

/* ------------------------------------------------------------------ */
/* Fields                                                              */
/* ------------------------------------------------------------------ */

const Field = styled.span<{ $width: number; $muted?: boolean }>`
  display: flex;
  align-items: stretch;
  flex: none;
  width: ${(p) => p.$width}px;
  height: 22px;
  border: 1px solid #a8a8a8;
  border-radius: 3px;
  background: ${(p) => (p.$muted ? "#f2f2f2" : "#fff")};
  color: ${(p) => (p.$muted ? "#666" : "#000")};
  font-family: ${monoFont};
  font-size: 10px;
`;
const bare = css`
  flex: 1;
  min-width: 0;
  width: 0;
  padding: 0 4px;
  border: 0;
  outline: 0;
  background: none;
  appearance: none;
  opacity: 1;
`;
const BareInput = styled.input`${bare} &::placeholder { color: #808080; opacity: 1; }`;
const BareSelect = styled.select<{ $large?: boolean }>`${bare} font-size: ${(p) => (p.$large ? 12 : 10)}px;`;
const Stepper = styled.span<{ $line?: boolean }>`
  display: flex;
  flex-direction: column;
  align-items: center;
  justify-content: center;
  gap: 4px;
  width: 14px;
  border-left: ${(p) => (p.$line === false ? "0" : "1px solid #b0b0b0")};
`;
const Spin = ({ id, value, width, muted }: { id: string; value: string; width: number; muted?: boolean }) => (
  <Field $width={width} $muted={muted}>
    <BareInput id={id} aria-label={muted ? "捕捉容差" : undefined} defaultValue={value} disabled={muted} />
    <Stepper><Caret $dir="up" $size={3} /><Caret $size={3} /></Stepper>
  </Field>
);
const SnapFields = styled.span`display: flex; gap: 2px;`;
const RightSpace = styled.span`
  flex: none;
  width: 223px;
`;

/* ------------------------------------------------------------------ */
/* Docks                                                               */
/* ------------------------------------------------------------------ */

const Main = styled.main`
  display: flex;
  flex: 1;
  min-height: 0;
`;
const SideBar = styled.aside`
  display: flex;
  flex-direction: column;
  flex: none;
  width: 52px;
  padding: 4px 0 0 3px;
  border-right: 1px solid ${line};
  background: linear-gradient(90deg, #fafafa, #eeeeee);
`;
const SideHandle = styled.span`
  width: 18px;
  height: 6px;
  margin: 0 0 1px 15px;
  ${dots}
`;
const SideButton = styled.button`
  display: flex;
  align-items: center;
  gap: 2px;
  height: 32px;
  padding: 0 4px;
  border: 0;
  background: none;
  > span { margin-left: 4px; }
`;
const DockColumn = styled.section`
  display: flex;
  flex-direction: column;
  flex: none;
  width: 340px;
`;
const DockTitle = styled.div`
  display: flex;
  align-items: center;
  gap: 3px;
  height: 20px;
  padding: 0 1px 0 4px;
`;
const DockName = styled.h2`
  flex: 1;
  margin: 0;
  font-size: 12px;
  font-weight: 400;
  line-height: 20px;
`;
const DockButton = styled.button`
  display: grid;
  place-items: center;
  width: 11px;
  height: 11px;
  padding: 0;
  border: 1px solid #777;
  border-radius: 3px;
  background: none;
`;
const DockTools = styled.div`
  display: flex;
  align-items: center;
  height: 30px;
  padding: 0 0 3px 4px;
`;
const SmallButton = styled.button<{ $wide?: boolean }>`
  display: flex;
  align-items: center;
  gap: 6px;
  width: ${(p) => (p.$wide ? 38 : 25)}px;
  height: 24px;
  padding: 0 4px;
  border: 0;
  background: none;
  &:disabled { opacity: 0.55; }
`;
const Frame = styled.div<{ $grow?: boolean }>`
  position: relative;
  display: grid;
  grid-template-columns: 1fr 14px;
  align-content: start;
  flex: ${(p) => (p.$grow ? "1" : "none")};
  border: 1px solid ${line};
  background: #fff;
`;
const TreeView = styled.ul`
  height: 240px;
  margin: 0;
  padding: 0;
  overflow: hidden;
  list-style: none;
`;
const TreeRow = styled.li<{ $level: number; $selected?: boolean }>`
  display: flex;
  align-items: center;
  gap: ${(p) => (p.$level ? 6 : 5)}px;
  height: 19px;
  padding-left: ${(p) => (p.$level ? 45 : 7)}px;
  background: ${(p) => (p.$selected ? "linear-gradient(90deg, #0a78d6, #1a86de)" : "none")};
  color: ${(p) => (p.$selected ? "#fff" : "#000")};
  font-size: 12px;
  line-height: 19px;
  white-space: nowrap;
`;
const Expander = styled.span`
  display: grid;
  place-items: center;
  width: 8px;
  margin-right: 3px;
`;
const scroll = css`
  display: flex;
  background: #e4e4e4;
`;
const VScroll = styled.div`${scroll} flex-direction: column; border-left: 1px solid ${line};`;
const HScroll = styled.div`${scroll} height: 14px; border-top: 1px solid ${line};`;
const Corner = styled.div`border: 1px solid ${line}; border-width: 1px 0 0 1px; background: #efefef;`;
const ScrollButton = styled.button`
  display: grid;
  place-items: center;
  flex: none;
  width: 13px;
  height: 13px;
  padding: 0;
  border: 0;
  background: #fafafa;
  box-shadow: 0 0 0 1px ${line};
`;
const Track = styled.span<{ $grow: number }>`flex: ${(p) => p.$grow};`;
const Thumb = styled.span<{ $grow: number }>`
  flex: ${(p) => p.$grow};
  background: #fafafa;
  box-shadow: 0 0 0 1px ${line};
`;
const ContextMenu = styled.ul`
  position: absolute;
  left: 219px;
  top: 128px;
  width: 120px;
  margin: 0;
  padding: 0;
  border: 1px solid #999;
  background: #fff;
  box-shadow: 3px 3px 3px rgba(0, 0, 0, 0.45);
  list-style: none;
`;
const ContextItem = styled.button<{ $active?: boolean }>`
  display: block;
  width: 100%;
  height: 25px;
  padding: 0 0 0 26px;
  border: 1px solid ${(p) => (p.$active ? "#42a5f5" : "transparent")};
  background: ${(p) => (p.$active ? "#0078d7" : "#fff")};
  color: ${(p) => (p.$active ? "#fff" : "#000")};
  line-height: 20px;
  text-align: left;
`;
const SplitHandle = styled.span`
  align-self: center;
  width: 18px;
  height: 3px;
  margin: 1px 0 2px;
  ${dots}
`;
const LayerRow = styled.label`
  grid-column: 1 / -1;
  display: flex;
  align-items: center;
  height: 19px;
  padding-left: 7px;
  gap: 7px;
  background: #efefef;
  font-weight: 700;
  text-decoration: underline;
  line-height: 19px;
`;
const RowEnd = styled.span`width: 9px; height: 17px; margin-left: auto; background: #dedede;`;
const Check = styled.input`
  flex: none;
  display: grid;
  place-items: center;
  width: 14px;
  height: 14px;
  margin: 0;
  border: 1px solid #b8b8b8;
  background: #fff;
  appearance: none;
  &:checked::before {
    content: "";
    width: 5px;
    height: 8px;
    margin-bottom: 2px;
    border: solid #000;
    border-width: 0 2px 2px 0;
    transform: rotate(38deg);
  }
`;
const Splitter = styled.div`
  display: grid;
  place-items: center;
  flex: none;
  width: 6px;
`;
const SplitDots = styled.span`width: 3px; height: 18px; ${dots}`;
const Canvas = styled.section`
  display: flex;
  justify-content: center;
  flex: 1;
  min-width: 0;
  padding: 22px 0 21px;
  border: 1px solid ${line};
  background: #fff;
`;
const MapSvg = styled.svg`
  display: block;
  height: 100%;
  max-width: 100%;
  aspect-ratio: 1;
`;

/* ------------------------------------------------------------------ */
/* World map                                                           */
/* ------------------------------------------------------------------ */

const americasLand = [
  "M920 250L925 215L970 198L985 225L1000 190L1020 200L1040 235L1035 180L1075 185L1060 160L1020 175L1060 145L1085 140L1110 120L1150 118L1185 128L1190 145L1215 165L1230 182L1215 205L1240 215L1255 235L1262 225L1285 232L1292 250L1270 275L1240 290L1250 300L1225 340L1218 400L1240 415L1230 440L1240 480L1225 510L1215 540L1215 600L1180 630L1140 645L1120 675L1080 700L1070 740L1055 783L1020 770L1000 735L985 690L985 650L1000 620L975 600L970 560L960 500L940 460L905 445L880 452L855 430L848 410L885 405L845 385L842 370L870 350L900 340L900 315L880 300L890 275L910 258Z",
  "M700 240L740 205L765 195L780 170L815 152L860 153L905 170L925 195L915 225L900 245L875 275L850 315L825 340L825 370L800 400L802 440L760 445L715 440L735 410L725 385L700 380L680 350L690 335L665 305L670 270L685 250L705 260Z",
  "M597 345L610 337L640 360L642 390L625 395L600 370ZM655 360L675 375L672 392L655 385ZM540 372L565 362L568 375L555 405L540 400ZM472 450L490 415L520 405L518 430L495 460ZM510 455L530 438L550 455L570 430L580 450L598 470L590 485L545 497L515 475ZM608 435L650 432L655 470L640 482L615 465ZM668 425L690 430L685 490L668 485ZM690 435L712 455L790 460L788 492L705 496L695 470ZM637 305L648 308L645 320ZM595 400L606 415L600 418ZM668 397L688 400L685 406ZM705 402L714 410L706 415Z",
  "M458 500L485 497L523 525L495 550L495 570L470 580L450 555ZM500 570L505 540L525 530L560 535L575 550L595 515L605 525L605 580L632 610L600 635L540 635L512 605L535 600ZM620 535L650 510L662 520L655 560L640 577L625 555ZM675 510L710 508L705 540L675 545ZM668 560L690 565L698 605L672 618Z",
  "M725 518L750 515L742 580L765 600L722 590L715 550ZM750 525L775 515L805 520L820 545L875 590L880 630L922 675L910 705L860 680L830 650L800 610L740 600L745 560ZM830 680L845 665L900 730L900 757L850 735L805 710ZM735 725L745 690L782 725L765 735ZM808 648L825 645L825 660L812 662ZM648 620L665 618L668 650L650 650Z",
  "M148 635L175 600L220 580L250 595L335 612L375 630L405 612L432 600L440 610L480 615L530 640L565 655L600 650L650 655L680 630L710 625L725 650L740 665L750 615L775 640L770 680L735 700L715 725L690 745L678 790L695 825L730 835L770 850L772 875L790 897L797 870L812 850L800 820L800 790L800 750L830 748L860 770L865 800L885 805L900 780L915 825L940 855L965 880L960 905L900 910L875 925L855 945L880 935L905 925L900 950L910 965L935 955L900 975L885 970L855 990L855 1005L830 1015L815 1040L812 1065L780 1095L775 1110L785 1145L770 1130L760 1105L715 1108L680 1108L658 1125L655 1175L680 1203L705 1200L715 1180L735 1180L728 1215L715 1225L740 1225L761 1230L765 1260L775 1277L804 1275L808 1290L779 1285L745 1255L696 1230L650 1215L600 1190L595 1165L565 1120L540 1095L530 1090L545 1130L568 1165L550 1150L530 1115L512 1085L480 1060L460 1020L462 960L472 945L430 905L415 860L375 800L330 785L290 770L260 780L240 805L180 855L110 885L180 845L220 800L180 800L155 765L150 740L190 735L185 712L140 695L155 680L190 680L180 655Z",
  "M940 940L960 895L968 920L987 945L970 945ZM1200 685L1215 680L1220 695L1265 680L1275 700L1245 730L1215 720ZM755 1170L790 1165L830 1192L790 1178ZM828 1202L848 1192L872 1200L850 1206ZM30 620L85 660L122 682L95 712L30 690ZM30 573L65 578L30 584ZM395 865L410 885L400 880ZM225 1188L233 1193L227 1197Z",
];
const eurasiaLand = [
  "M110 985L165 988L168 945L145 932L172 930L200 905L225 870L245 862L240 835L255 820L252 850L270 858L300 862L340 860L335 830L350 800L380 792L385 780L335 782L335 740L362 700L360 690L345 692L340 710L308 745L305 775L318 785L300 800L298 830L270 845L262 800L235 812L215 790L215 745L265 705L290 650L330 605L370 585L400 595L395 610L430 615L470 635L480 665L465 682L415 670L435 700L450 720L475 690L505 675L500 640L520 650L560 640L620 630L610 600L640 615L675 635L690 660L672 610L680 570L690 542L712 542L718 600L715 650L690 675L712 680L722 650L745 650L720 620L725 580L740 550L775 555L795 580L772 525L820 510L825 485L885 455L925 440L925 415L945 400L965 415L965 435L1000 430L1018 455L1005 490L960 530L935 560L1010 525L1075 535L1100 520L1130 535L1145 590L1155 570L1205 575L1215 545L1275 560L1300 585L1350 590L1365 615L1420 610L1425 630L1440 605L1480 610L1530 640L1530 705L1485 710L1500 745L1470 765L1435 780L1390 780L1380 820L1350 870L1335 898L1328 850L1335 820L1375 775L1392 745L1360 760L1335 765L1310 795L1225 795L1200 830L1178 855L1215 870L1220 900L1200 950L1170 985L1145 995L1115 1020L1130 1060L1115 1070L1105 1030L1095 1020L1075 1030L1080 1015L1050 1035L1080 1045L1062 1070L1078 1105L1070 1140L1040 1165L1000 1180L975 1182L950 1185L960 1205L980 1235L975 1260L955 1275L930 1255L915 1245L905 1260L920 1290L940 1310L945 1330L925 1320L905 1270L900 1220L880 1220L870 1185L855 1172L835 1175L815 1190L770 1225L765 1265L750 1280L735 1250L718 1200L710 1175L695 1175L680 1155L640 1145L595 1145L580 1120L535 1108L545 1140L580 1165L590 1145L618 1175L600 1200L560 1230L500 1245L490 1215L465 1175L435 1110L440 1050L415 1055L380 1045L372 1020L400 1010L440 1005L485 1005L480 985L430 965L400 955L385 1000L355 1005L370 1020L355 1025L350 1045L335 1040L320 1010L300 985L275 965L265 975L320 1020L300 1035L285 1015L245 980L200 985L195 1000L165 1045L135 1052L108 1045L112 1010Z",
  "M560 570L580 530L595 485L635 450L680 423L687 437L645 470L617 500L597 550L600 592L570 585ZM258 320L300 312L310 350L330 360L312 380L300 433L282 400L260 360ZM312 300L345 290L375 305L365 335L330 330ZM330 365L352 385L348 410L335 400ZM860 300L883 255L900 290L890 305ZM870 315L910 310L915 350L900 357L878 340ZM935 335L955 370L915 388ZM1192 455L1245 465L1240 480L1210 490L1195 475ZM1258 470L1288 485L1265 485ZM1217 513L1235 530L1220 528Z",
  "M515 285L535 275L555 270L550 285L530 300ZM580 260L600 240L610 250L600 270L585 280ZM600 285L615 280L605 305L595 300ZM618 275L632 270L630 288L618 290ZM640 270L658 260L655 275ZM560 295L575 300L565 303ZM605 226L612 230L606 233ZM638 232L648 236L640 238ZM410 302L422 300L418 306ZM760 272L767 274L762 277ZM844 257L852 260L846 263ZM850 315L868 313L860 322ZM535 622L548 625L540 632ZM695 530L705 533L698 538Z",
  "M138 815L155 805L155 850L175 870L188 890L175 905L142 910L155 890L150 860L135 840ZM110 860L130 852L130 885L105 893ZM270 1038L298 1035L292 1048ZM240 1008L248 1010L246 1030L240 1028ZM240 990L247 990L244 1003ZM350 1062L372 1062L360 1066ZM418 1062L432 1060L424 1067ZM255 845L266 843L266 854L256 853Z",
  "M1225 865L1240 920L1230 955L1225 910ZM1220 965L1250 985L1215 998ZM1215 1008L1222 1045L1205 1065L1175 1062L1145 1080L1180 1050L1205 1035ZM1138 1080L1150 1085L1142 1098ZM1155 1075L1172 1072L1160 1082ZM1070 1150L1076 1155L1068 1172ZM982 1190L995 1190L988 1203ZM768 1268L782 1290L770 1297ZM1068 1202L1078 1205L1078 1230L1092 1250L1070 1240ZM1085 1285L1108 1268L1108 1295L1098 1298ZM1080 1255L1090 1262L1084 1275Z",
];
const southLand = [
  "M530 -20L570 -32L613 -35L617 -10L668 25L679 5L748 22L744 40L768 100L785 150L800 180L838 175L820 230L785 280L775 310L782 370L750 410L755 440L738 480L715 522L668 533L660 500L640 450L627 390L638 340L632 300L612 265L612 225L590 210L525 227L490 190L475 150L476 95L500 60L515 20ZM800 400L828 352L833 370L815 450L800 452L797 430Z",
  "M150 205L160 182L180 172L235 185L255 215L285 225L300 265L345 280L375 298L378 325L355 365L350 410L340 435L305 450L302 480L272 535L250 530L258 565L230 575L228 595L215 600L210 640L210 670L195 695L195 725L212 748L200 755L175 740L162 700L165 640L180 530L187 440L187 395L160 365L130 300L132 260L150 235ZM125 192L150 200L150 212L130 205Z",
  "M1173 440L1215 405L1220 385L1248 368L1265 350L1295 355L1290 375L1318 393L1328 342L1345 385L1362 420L1385 460L1385 500L1368 560L1340 570L1315 560L1310 540L1302 520L1290 535L1275 510L1245 510L1210 528L1190 537L1182 525L1185 500L1173 465ZM1338 590L1358 592L1350 618ZM1492 535L1505 560L1520 568L1505 597L1498 575ZM1488 592L1497 600L1472 650L1457 645L1478 615ZM1262 265L1300 280L1320 275L1350 295L1358 315L1370 337L1350 330L1325 328L1310 318L1290 290ZM1150 250L1175 240L1192 215L1200 225L1190 260L1180 290L1155 280ZM1075 220L1100 245L1130 280L1130 305L1110 285ZM1130 308L1175 315L1205 325L1145 320ZM1203 265L1222 252L1210 270L1220 295L1205 298ZM1365 303L1382 292L1376 306ZM1215 325L1240 322L1225 335ZM1442 412L1460 430L1452 426ZM1514 392L1528 385L1520 398ZM235 710L254 706L248 713ZM930 678L942 680L936 686ZM362 738L370 745L366 743Z",
];
const polarWest =
  "M-20 365L12 365L40 380L115 388L133 400L172 365L175 345L220 350L250 300L300 290L345 265L395 260L403 235L420 243L500 250L530 262L537 285L590 282L588 240L580 225L585 200L632 198L635 212L700 222L738 245L760 215L808 228L800 195L785 195L805 170L805 145L820 130L835 155L848 140L850 100L880 60L910 35L930 28L885 65L895 90L887 130L897 210L888 272L935 305L980 360L1015 378L1035 370L1078 380L1090 355L1143 310L1140 295L1155 285L1155 250L1180 255L1200 218L1250 200L1270 170L1325 160L1335 148L1345 157L1440 152L1500 152V790H-20ZM832 105L845 92L838 108ZM778 178L800 168L795 178ZM870 50L890 42L872 60Z";
const polarEast =
  "M0 160L15 148L30 157L115 153L130 147L200 160L235 148L265 128L308 153L315 130L395 90L400 78L432 75L445 95L530 110L570 150L600 120L655 83L690 92L725 87L733 60L740 72L785 75L825 92L855 73L890 95L950 87L975 95L982 80L1015 78L1085 95L1115 122L1160 123L1210 160L1260 175L1280 195L1270 237L1245 250L1225 290L1223 330L1240 372L1252 350L1300 353L1380 368V790H0Z";
const westWater =
  "M700 945L725 928L757 950L738 958L740 975L735 1000L728 985L733 962L718 943ZM762 955L785 968L775 980L768 965ZM765 998L790 985L815 978L790 995ZM455 685L500 670L505 685L470 700ZM515 755L560 745L570 740L545 765L525 768ZM632 870L650 870L664 905L652 905L640 885ZM635 880L645 905L640 900ZM540 1002L550 1010L543 1008ZM555 798L580 795L560 802ZM612 820L622 815L618 830ZM898 925L935 915L925 945L905 945ZM628 735L638 732L632 742ZM655 715L668 718L658 722ZM640 768L652 765L645 775ZM585 680L595 684L588 688ZM860 880L868 890L862 893ZM895 862L908 866L900 870ZM590 775L600 770L596 782ZM602 720L612 722L606 727Z";
const eastWater =
  "M525 965L565 948L570 965L550 985L575 1015L575 1045L550 1045L540 1015L525 985ZM945 893L970 880L987 845L985 865L960 893ZM718 955L760 948L725 960ZM400 760L417 765L412 780L402 775ZM382 750L395 748L388 765ZM918 490L955 485L945 500L925 500ZM430 755L442 770L436 772ZM835 1010L852 1008L840 1025ZM405 670L430 690L425 715L412 690ZM270 795L280 795L272 805Z";
const westBorders =
  "M336 615V778L362 797L377 787L417 840L415 855M472 925H675L730 935L770 965L765 1000L815 975L850 965L865 943L880 965M512 1085L560 1098L590 1093L615 1115L630 1112L658 1142M696 1225L705 1205L722 1207L720 1228L750 1232M848 1192V1204";
const eastBorders =
  "M525 965L522 925L555 893L600 905L625 905L625 870L660 858L695 848L720 860L745 862L770 895L790 910L825 922L865 905L905 893L930 908L960 910L1000 918L1040 915L1070 875L1105 880L1120 920L1145 935L1172 930L1155 985M825 922L850 965L890 988L950 1000L1005 990L1030 965L1060 945L1035 915M825 922L790 945L770 965L770 995L710 1000L700 1030L735 1045L755 1070L770 1105L835 1125L890 1115L900 1150L920 1170L965 1170M590 1005V965L640 975L680 1012L710 1000M575 1035L630 1055L675 1040L640 1005L590 1005M630 1055L628 1110L680 1105L725 1055L700 1040M630 1110L640 1145M690 1155L695 1130L715 1105L735 1075L755 1070M225 940L290 920L350 925L395 945M283 862L285 900L350 920M350 855L352 890L410 895L440 912L472 920L470 945M165 988L200 992M125 995V1045M262 800L270 720L290 660L330 620L352 645V690M330 620L365 630L390 610L395 680L408 740L385 780L383 840L410 865L410 890M335 835L370 840L380 870M440 1050L495 1045L510 1090L530 1115M437 1090L470 1090L520 1115M495 1215L565 1195L590 1150M485 985L520 1010L515 1045L495 1045M195 910L225 925L228 975M228 945L260 945L300 960L340 950L395 960M320 985L335 1000L385 1000M300 930L345 945M770 1105L830 1135L835 1170L850 1150L865 1180L890 1115M905 1195L930 1175L970 1230L940 1240L965 1255M905 1195L910 1265M1100 1015L1145 990M1110 1035L1128 1030M985 1332L1020 1325L1045 1300";
const southBorders =
  "M530 70L585 118L640 82L698 110L697 15M698 94H760M617 -10L610 10L620 45L617 70L640 82M640 82L645 110L640 160L585 160L585 150M585 118L580 145L545 155M530 70L535 145L480 145M516 50L490 98H476M650 225L642 200L640 160M690 110L685 155L690 190L650 205M690 190L715 190L740 195L742 170L765 130M745 190L750 220L785 235L825 195L800 180L765 155M650 225L700 222L750 232M785 235L780 270M615 245H640V270L632 295M645 245L655 270L632 300L665 315L680 315L685 345L725 350L718 325L722 240M627 390L700 395L740 370L755 375M675 395L672 465L720 430L740 425V380M655 485L672 482L672 465M722 325L745 330L750 345L780 345M740 275L775 295M585 160L590 215M548 180V222M570 180L575 215M520 185L548 182L560 155L585 150M495 190L520 190L515 215M480 160L495 165M640 190L610 225M709 485L720 485L715 498ZM733 455V468M187 390L192 340L170 325L172 300L190 290L190 265L140 250L135 290L160 270M180 180L175 210L205 215L205 250L240 245L240 205M190 265L205 250M260 220V245L285 240M192 340L215 335L220 350L240 365L250 380L255 410L235 410L230 430L200 432L192 380M200 432L190 540L178 640L173 690L195 720V745M255 410L270 440L272 465L250 470L230 430M275 465L255 495L250 530M258 495L278 515M1320 280V327";

const WorldMap = () => (
  <MapSvg viewBox="0 0 886 886" role="img" aria-label="OpenStreetMap">
    <defs>
      <filter id="coast" x="0" y="0" width="886" height="886" filterUnits="userSpaceOnUse" colorInterpolationFilters="sRGB">
        <feTurbulence type="fractalNoise" baseFrequency="0.16" numOctaves="3" seed="7" />
        <feDisplacementMap in="SourceGraphic" scale="7" xChannelSelector="R" yChannelSelector="G" />
      </filter>
    </defs>
    <rect width="886" height="886" fill="#aad3df" />
    <g filter="url(#coast)" fill="#f2efe9" stroke="none">
      <g transform="translate(-16 -4) scale(.33333)">
        {americasLand.map((d) => <path key={d} d={d} />)}
        <path d={westWater} fill="#aad3df" />
        <path d="M708 262L735 290H775L805 250M735 290L740 330L775 325M900 240L870 290M740 350L760 400M1135 230L1160 212L1220 210L1205 240L1180 242M1225 220L1210 275M1190 145L1120 165" fill="none" stroke="#aad3df" strokeWidth="6" />
      </g>
      <g transform="translate(384 -4) scale(.33333)">
        {eurasiaLand.map((d) => <path key={d} d={d} />)}
        <path d={eastWater} fill="#aad3df" />
      </g>
      <g transform="translate(184 356) scale(.45914 .33333)">
        {southLand.map((d) => <path key={d} d={d} />)}
        <path d="M735 262L747 258V278H736ZM748 335L751 362L747 358ZM225 495H232V503H225ZM180 180L184 185L180 195ZM1298 478H1304V486H1298Z" fill="#aad3df" />
      </g>
      <path transform="translate(-4 636) scale(.33333)" d={polarWest} />
      <path transform="translate(436 636) scale(.33333)" d={polarEast} />
    </g>
    <rect y="800" width="886" height="86" fill="#f2efe9" />
    <g fill="none" strokeLinejoin="round">
      <path transform="translate(384 -4) scale(.33333)" d="M1115 550L1112 590L1090 630V680L1125 730" stroke="#c3dde2" vectorEffect="non-scaling-stroke" />
      <g stroke="#d6c3d0">
        <path transform="translate(-16 -4) scale(.33333)" d={westBorders} vectorEffect="non-scaling-stroke" />
        <path transform="translate(384 -4) scale(.33333)" d={eastBorders} vectorEffect="non-scaling-stroke" />
        <path transform="translate(184 356) scale(.45914 .33333)" d={southBorders} vectorEffect="non-scaling-stroke" />
      </g>
    </g>
  </MapSvg>
);

/* ------------------------------------------------------------------ */
/* Status bar                                                          */
/* ------------------------------------------------------------------ */

const StatusBar = styled.footer`
  position: relative;
  display: flex;
  align-items: center;
  flex: none;
  height: 27px;
  padding: 0 7px 0 4px;
  gap: 3px;
  font-family: ${monoFont};
  font-size: 11px;
  white-space: nowrap;
`;
const Search = styled.label`
  display: flex;
  align-items: center;
  width: 200px;
  height: 22px;
  padding-left: 8px;
  gap: 2px;
  border: 1px solid #a8a8a8;
  border-radius: 3px;
  background: #fff;
`;
const Message = styled.span`flex: 1; margin-left: 5px;`;
const StatusLabel = styled.label<{ $before?: number }>`margin-left: ${(p) => p.$before ?? 6}px;`;
const StatusButton = styled.button`
  display: flex;
  align-items: center;
  gap: 4px;
  padding: 0;
  margin-left: 4px;
  border: 0;
  background: none;
  font-size: 10px;
`;
const LastButton = styled(StatusButton)`margin-left: 22px;`;
const CrsButton = styled(StatusButton)`margin-left: 14px;`;
const LockButton = styled(StatusButton)`margin-left: 8px;`;
const ComboArrow = styled.span`
  display: grid;
  place-items: center;
  width: 20px;
  border-left: 1px solid #b0b0b0;
`;
const SpinGap = styled.span`margin-left: 6px;`;
const RenderLabel = styled.label`
  display: flex;
  align-items: center;
  gap: 6px;
  margin-left: 3px;
`;
const Watermark = styled.span`
  position: absolute;
  right: 4px;
  top: -1px;
  color: rgba(190, 190, 190, 0.6);
  font-family: "Liberation Sans", sans-serif;
  font-size: 16px;
  pointer-events: none;
`;

const sources = [
  ["feather", "SpatiaLite", ""], ["elephant", "PostGIS", ""], ["mssql", "MSSQL", "right"], ["oracle", "Oracle", "right"],
  ["db2", "DB2", "right"], ["globe", "WMS/WMTS", "right"], ["globe", "XYZ Tiles", "down"],
] as const;
const tileSources = ["Bing VirtualEarth", "CartoDb Dark Matter", "CartoDb Positron", "Esri Boundaries Places", "Esri Gray (dark)", "Esri Gray (light)"];
const menus = ["项目J", "编辑E", "视图V", "图层L", "设置S", "插件P", "矢量O", "栅格R", "数据库D", "网络W", "网孔M", "处理C", "帮助H"];
const sideTools = [
  ["addvector", "添加矢量图层"], ["addraster", "添加栅格图层"], ["addmesh", "添加网孔图层"], ["addcsv", "添加分隔文本图层"], ["addspatialite", "添加 SpatiaLite 图层"],
  ["addvirtual", "添加虚拟图层"], ["addpg", "添加 PostGIS 图层", "a"], ["addwms", "添加 WMS 图层", "a"], ["addwcs", "添加 WCS 图层"], ["addwfs", "添加 WFS 图层", "a"], ["chipnew", "新建临时图层", "a"],
];

const DockHeader = ({ name }: { name: string }) => (
  <DockTitle>
    <DockName>{name}</DockName>
    <DockButton aria-label={`浮动${name}`}>
      <svg width="8" height="8" fill="none" stroke="#444"><path d="M3 1.500h3.500v3.500M1.500 3.500h3v3h-3z" /></svg>
    </DockButton>
    <DockButton aria-label={`关闭${name}`}>
      <svg width="8" height="8" fill="none" stroke="#444" strokeWidth="2"><path d="M1 1l6 6M7 1L1 7" /></svg>
    </DockButton>
  </DockTitle>
);

const SmallTools = ({ items }: { items: string[][] }) => (
  <>
    {items.map(([icon, label]) => (
      <SmallButton key={label} aria-label={label}><Icon name={icon} size={16} /></SmallButton>
    ))}
  </>
);

export default function App() {
  return (
    <Window>
      <GlobalStyle />
      <TitleBar>
        <svg width="16" height="16" viewBox="0 0 16 16" fill="none">
          <circle cx="8" cy="8" r="6.200" stroke="#589632" strokeWidth="3.200" />
          <path d="M9 9l6 6" stroke="#93b023" strokeWidth="3.500" />
          <path d="M8 8h3l-3 3z" fill="#ee7913" />
        </svg>
        <Title>*未命名的项目 - QGIS</Title>
        <CaptionButton aria-label="最小化"><svg width="11" height="11" stroke="#000"><path d="M0 5.500h10" /></svg></CaptionButton>
        <CaptionButton aria-label="还原"><svg width="11" height="11" fill="none" stroke="#000"><path d="M.500 2.500h7v8h-7zM2.500 2.500v-2h8v8h-3" /></svg></CaptionButton>
        <CaptionButton aria-label="关闭"><svg width="11" height="11" stroke="#000"><path d="M.500.500l10 10M10.500.500l-10 10" /></svg></CaptionButton>
      </TitleBar>
      <MenuBar>
        {menus.map((m) => (
          <MenuButton key={m}>{m.slice(0, -1)}(<u>{m.slice(-1)}</u>)</MenuButton>
        ))}
      </MenuBar>

      <ToolRow>
        <Tools items={fileTools} />
        <Tools items={navTools} />
        <Tools items={attrTools} />
      </ToolRow>
      <ToolRow>
        <Tools items={sourceTools} />
        <Tools items={editTools} />
        <Tools items={labelTools} />
        <Tools items={[["db", "数据库管理器"]]} before="21px" />
        <Tools items={webTools} />
        <Tools items={[["python", "Python 控制台"]]} />
        <Tools items={[["help", "帮助目录"]]} />
        <Tools items={[]} before="26px" />
      </ToolRow>
      <ToolRow>
        <Tools items={advTools} />
        <Tools items={rasterTools} />
        <Tools items={snapTools} before="auto">
          <SnapFields>
            <Spin id="tolerance" value="12" width={83} muted />
            <Field $width={64} $muted>
              <BareSelect aria-label="捕捉单位" disabled $large><option>像素</option></BareSelect>
              <Stepper $line={false}><Caret $color="#999" /></Stepper>
            </Field>
          </SnapFields>
          <ToolButton aria-label="拓扑编辑"><Icon name="topo" /></ToolButton>
          <ToolButton aria-label="交点捕捉" disabled><Icon name="inter" /></ToolButton>
          <ToolButton aria-label="启用追踪" disabled $wide><Icon name="trace" /><Caret /></ToolButton>
        </Tools>
        <RightSpace />
      </ToolRow>
      <ToolRow>
        <Tools items={shapeTools} />
        <Tools items={[["qsearch", "快速地图搜索"], ["qmap", "快速地图服务"]]} />
        <Tools items={[["crystal", "三维导出"], ["cloud", "上传"]]} />
      </ToolRow>

      <Main>
        <SideBar>
          <SideHandle />
          {sideTools.map(([icon, label, arrow]) => (
            <SideButton key={label} aria-label={label}>
              <Icon name={icon} />
              {arrow && <Caret />}
            </SideButton>
          ))}
        </SideBar>

        <DockColumn>
          <DockHeader name="浏览" />
          <DockTools>
            <SmallTools items={[["boxadd", "添加所选图层"], ["refresh", "刷新浏览"], ["funnel", "过滤浏览"], ["collapse", "折叠全部浏览"], ["info", "属性"]]} />
          </DockTools>
          <Frame>
            <TreeView role="tree">
              {sources.map(([icon, name, dir]) => (
                <TreeRow key={name} role="treeitem" $level={0} $selected={name === "XYZ Tiles"}>
                  <Expander>{dir && <Caret $dir={dir} $color={dir === "down" ? "#1b3b5c" : "#555"} />}</Expander>
                  <Icon name={icon} size={16} />
                  {name}
                </TreeRow>
              ))}
              {tileSources.map((name) => (
                <TreeRow key={name} role="treeitem" $level={1}>
                  <Icon name="tiles" size={14} />
                  {name}
                </TreeRow>
              ))}
            </TreeView>
            <VScroll>
              <ScrollButton aria-label="向上滚动"><Caret $dir="up" /></ScrollButton>
              <Track $grow={55} /><Thumb $grow={35} /><Track $grow={122} />
              <ScrollButton aria-label="向下滚动"><Caret /></ScrollButton>
            </VScroll>
            <HScroll>
              <ScrollButton aria-label="向左滚动"><Caret $dir="left" /></ScrollButton>
              <Thumb $grow={169} /><Track $grow={128} />
              <ScrollButton aria-label="向右滚动"><Caret $dir="right" /></ScrollButton>
            </HScroll>
            <Corner />
            <ContextMenu role="menu">
              {["新建连接...", "保存连接...", "载入连接..."].map((t, i) => (
                <li key={t} role="none"><ContextItem role="menuitem" $active={i === 2}>{t}</ContextItem></li>
              ))}
            </ContextMenu>
          </Frame>
          <SplitHandle />
          <DockHeader name="图层" />
          <DockTools>
            <SmallTools items={[["brush", "图层样式"], ["group", "添加组"], ["eye", "地图主题"], ["funnel", "过滤图例"]]} />
            <SmallButton aria-label="按表达式过滤" disabled $wide><Icon name="eps" size={16} /><Caret /></SmallButton>
            <SmallTools items={[["expand", "展开全部"], ["collapse", "折叠全部"], ["boxdel", "移除图层"]]} />
          </DockTools>
          <Frame $grow>
            <LayerRow>
              <Caret />
              <Check type="checkbox" defaultChecked />
              <Icon name="osm" size={14} />
              OpenStreetMap
              <RowEnd />
            </LayerRow>
          </Frame>
        </DockColumn>
        <Splitter><SplitDots /></Splitter>
        <Canvas><WorldMap /></Canvas>
      </Main>

      <StatusBar>
        <Search>
          <svg width="14" height="14" fill="none" stroke="#888" strokeWidth="1.500"><circle cx="6" cy="6" r="4" /><path d="M9 9l4 4" strokeWidth="2" /></svg>
          <BareInput aria-label="定位" placeholder="键入以定位(Ctrl+K)" />
        </Search>
        <Message>正在获取图块文件。</Message>
        <StatusLabel htmlFor="coord">坐标</StatusLabel>
        <Field $width={117}><BareInput id="coord" defaultValue="-34197491,9987479" /></Field>
        <StatusButton aria-label="切换范围显示">
          <svg width="16" height="16" fill="none" stroke="#333" strokeWidth="1.500"><ellipse cx="6" cy="9" rx="3" ry="5" transform="rotate(-35 6 9)" /><path d="M3 2l10 12M10 3l4-2M9 6l5-1M1 6l3 6M8 15l5-1l1-5M2 3l6 3M5 9l5 5" /></svg>
        </StatusButton>
        <StatusLabel $before={8} htmlFor="scale">比例尺</StatusLabel>
        <Field $width={83}>
          <BareSelect id="scale"><option>171192531</option></BareSelect>
          <ComboArrow><Caret /></ComboArrow>
        </Field>
        <LockButton aria-label="锁定比例">
          <svg width="14" height="16"><path d="M3.500 8V5a3.500 3.500 0 0 1 7 0v3" fill="none" stroke="#666" strokeWidth="1.800" /><rect x="1" y="7" width="12" height="9" rx="1" fill="#555" /></svg>
        </LockButton>
        <StatusLabel htmlFor="magnifier">放大镜</StatusLabel>
        <Spin id="magnifier" value="100%" width={92} />
        <StatusLabel htmlFor="rotation">旋转角度</StatusLabel>
        <SpinGap><Spin id="rotation" value="0.0°" width={88} /></SpinGap>
        <RenderLabel><Check type="checkbox" defaultChecked />渲染</RenderLabel>
        <CrsButton>
          <svg width="14" height="14" fill="#aaa" stroke="#555"><circle cx="7" cy="7" r="6" /><path d="M1 7h12M7 1v12M3 3h8M3 11h8" fill="none" /><ellipse cx="7" cy="7" rx="3" ry="6" fill="none" /></svg>
          EPSG:3857
        </CrsButton>
        <LastButton aria-label="消息">
          <svg width="18" height="18" fill="#555"><path d="M9 1a8 7 0 0 1 4 13l1 4l-5-3A8 7 0 0 1 9 1z" /><path d="M5 7h8M5 10h6" stroke="#ddd" strokeWidth="1.500" /></svg>
        </LastButton>
        <Watermark>https://blog.csdn.net/QGISClass</Watermark>
      </StatusBar>
    </Window>
  );
}
